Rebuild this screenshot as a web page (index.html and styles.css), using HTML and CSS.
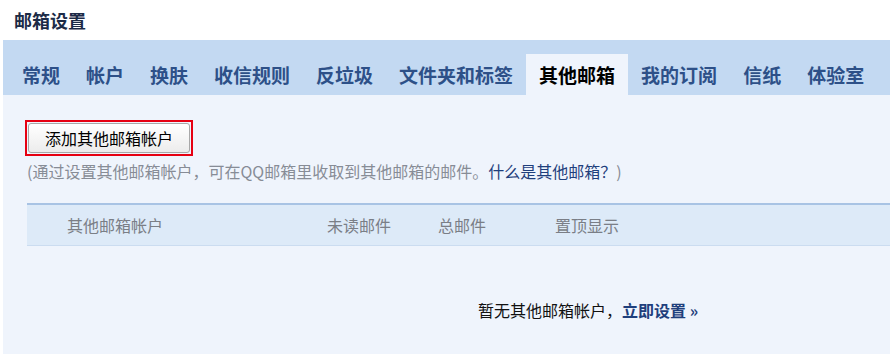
FILE: index.html
```html
<!DOCTYPE html>
<html lang="zh-CN">
<head>
<meta charset="utf-8">
<title>邮箱设置</title>
<link rel="stylesheet" href="styles.css">
</head>
<body>
<div class="page">
  <h1 class="title">邮箱设置</h1>
  <div class="tabs">
    <a class="tab">常规</a>
    <a class="tab">帐户</a>
    <a class="tab">换肤</a>
    <a class="tab">收信规则</a>
    <a class="tab">反垃圾</a>
    <a class="tab">文件夹和标签</a>
    <a class="tab active">其他邮箱</a>
    <a class="tab">我的订阅</a>
    <a class="tab">信纸</a>
    <a class="tab">体验室</a>
  </div>
  <div class="content">
    <div class="btn-wrap"><button class="btn">添加其他邮箱帐户</button></div>
    <p class="desc">(通过设置其他邮箱帐户，可在QQ邮箱里收取到其他邮箱的邮件。<a class="link">什么是其他邮箱？</a>)</p>
    <div class="table">
      <div class="thead">
        <span class="col c1">其他邮箱帐户</span>
        <span class="col c2">未读邮件</span>
        <span class="col c3">总邮件</span>
        <span class="col c4">置顶显示</span>
      </div>
      <div class="empty">暂无其他邮箱帐户，<a class="now">立即设置 »</a></div>
    </div>
  </div>
</div>
</body>
</html>
```
FILE: styles.css
```css
html, body {
  margin: 0;
  padding: 0;
  background: #ffffff;
  overflow: hidden;
}
body {
  font-family: "Noto Sans CJK SC", "Noto Sans", "Liberation Sans", sans-serif;
}
.page {
  width: 890px;
  height: 354px;
  display: flex;
  flex-direction: column;
}
.title {
  margin: 0;
  height: 40px;
  line-height: 40px;
  padding-left: 14px;
  font-size: 18px;
  font-weight: bold;
  color: #1c2b47;
}
.tabs {
  margin-left: 3px;
  height: 55px;
  background: #c3d9f2;
  display: flex;
  align-items: flex-end;
  padding-left: 6px;
  overflow: hidden;
}
.tab {
  display: block;
  flex: none;
  height: 41px;
  line-height: 41px;
  padding: 0 13px;
  font-size: 19px;
  font-weight: bold;
  color: #2d5088;
  white-space: nowrap;
}
.tab.active {
  background: #eff4fc;
  color: #000000;
}
.content {
  margin-left: 3px;
  flex: 1;
  background: #eff4fc;
  padding: 25px 0 0 22px;
}
.btn-wrap {
  display: inline-block;
  border: 2px solid #e60012;
  padding: 1px;
}
.btn {
  display: block;
  height: 30px;
  padding: 0 16px;
  border: 1px solid #a8a8a8;
  border-radius: 3px;
  background: linear-gradient(#ffffff, #ececec);
  font-family: "Noto Sans CJK SC", sans-serif;
  font-size: 16px;
  line-height: 28px;
  color: #000000;
}
.desc {
  margin: 5px 0 0 2px;
  font-size: 16px;
  line-height: 20px;
  color: #878c96;
  white-space: nowrap;
}
.link {
  color: #1f3f7c;
}
.table {
  margin: 22px 0 0 2px;
}
.thead {
  height: 40px;
  border-top: 2px solid #a8c3e4;
  border-bottom: 1px solid #cbdcf0;
  background: #ddeaf8;
  display: flex;
  align-items: center;
  font-size: 16px;
  color: #7a7e86;
  padding-left: 40px;
}
.col {
  display: block;
  white-space: nowrap;
}
.c1 { width: 260px; }
.c2 { width: 111px; }
.c3 { width: 117px; }
.c4 { width: 100px; }
.empty {
  padding: 54px 0 0 451px;
  font-size: 16px;
  line-height: 20px;
  color: #111111;
  white-space: nowrap;
}
.now {
  color: #1f3f7c;
  font-weight: bold;
}
```
